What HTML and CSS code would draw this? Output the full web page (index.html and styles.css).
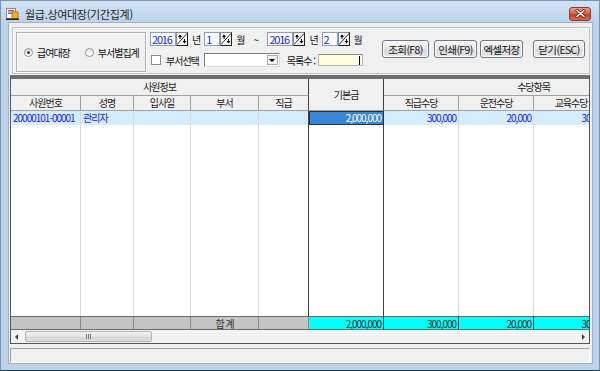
FILE: index.html
```html
<!DOCTYPE html>
<html lang="ko">
<head>
  <meta charset="UTF-8">
  <title>월급.상여대장(기간집계)</title>
  <link rel="stylesheet" href="styles.css">
</head>
<body>

  <div class="window">

    <!-- Title bar -->
    <div class="titlebar">
      <svg class="app-icon" width="13" height="13" viewBox="0 0 13 13">
        <rect x="0.5" y="1.5" width="9" height="10" fill="#fff" stroke="#8c8c8c"/>
        <rect x="2" y="3" width="6" height="1.5" fill="#e0383c"/>
        <rect x="2" y="5.5" width="4" height="1.5" fill="#3a6fd8"/>
        <rect x="6" y="5" width="6" height="6.5" fill="#f4b21c" stroke="#b07a10"/>
        <rect x="0" y="11.5" width="13" height="1.5" fill="#222"/>
      </svg>
      <span class="title">월급.상여대장(기간집계)</span>
      <div class="close-btn">
        <svg width="11" height="9" viewBox="0 0 11 9">
          <path d="M2 1.5 L9 7.5 M9 1.5 L2 7.5" stroke="#6b1f16" stroke-width="3" stroke-linecap="round"/>
          <path d="M2 1.5 L9 7.5 M9 1.5 L2 7.5" stroke="#fff" stroke-width="1.6" stroke-linecap="round"/>
        </svg>
      </div>
    </div>

    <div class="client">

      <!-- Search panel -->
      <div class="toolbar">
        <div class="radio-box">
          <label class="radio"><span class="dot checked"></span>급여대장</label>
          <label class="radio second"><span class="dot"></span>부서별집계</label>
        </div>

        <div class="filters">
          <div class="frow">
            <div class="spin wide"><span class="spin-val">2016</span><span class="spin-btn"></span></div>
            <span class="lbl">년</span>
            <div class="spin"><span class="spin-val">1</span><span class="spin-btn"></span></div>
            <span class="lbl">월</span>
            <span class="tilde">~</span>
            <div class="spin wide"><span class="spin-val">2016</span><span class="spin-btn"></span></div>
            <span class="lbl">년</span>
            <div class="spin"><span class="spin-val">2</span><span class="spin-btn"></span></div>
            <span class="lbl">월</span>
          </div>
          <div class="frow">
            <span class="check"></span>
            <span class="lbl">부서선택</span>
            <div class="combo"><span class="combo-arrow"></span></div>
            <span class="lbl count">목록수 :</span>
            <div class="count-box"><span class="caret"></span></div>
          </div>
        </div>

        <div class="buttons">
          <button class="btn b-search">조회(F8)</button>
          <button class="btn b-print">인쇄(F9)</button>
          <button class="btn b-excel">엑셀저장</button>
          <button class="btn b-close">닫기(ESC)</button>
        </div>
      </div>

      <!-- Grid -->
      <div class="grid">
        <div class="grid-view">
          <table class="sheet">
            <colgroup>
              <col class="w-no"><col class="w-name"><col class="w-date"><col class="w-dept"><col class="w-rank">
              <col class="w-money"><col class="w-money"><col class="w-money"><col class="w-money"><col class="w-money">
            </colgroup>
            <thead>
              <tr class="hr1">
                <th colspan="5" class="dk-r">사원정보</th>
                <th rowspan="2" class="dk-r">기본금</th>
                <th colspan="4">수당항목</th>
              </tr>
              <tr class="hr2">
                <th>사원번호</th>
                <th>성명</th>
                <th>입사일</th>
                <th>부서</th>
                <th class="dk-r">직급</th>
                <th>직급수당</th>
                <th>운전수당</th>
                <th>교육수당</th>
                <th></th>
              </tr>
            </thead>
            <tbody>
              <tr class="row sel">
                <td>20000101-00001</td>
                <td>관리자</td>
                <td></td>
                <td></td>
                <td class="dk-r"></td>
                <td class="num cur">2,000,000</td>
                <td class="num">300,000</td>
                <td class="num">20,000</td>
                <td class="num">30,000</td>
                <td></td>
              </tr>
              <tr class="filler">
                <td></td><td></td><td></td><td></td><td class="dk-r"></td>
                <td class="dk-r"></td><td></td><td></td><td></td><td></td>
              </tr>
              <tr class="total">
                <td class="g"></td>
                <td class="g"></td>
                <td class="g"></td>
                <td class="g sum-lbl">합 계</td>
                <td class="g"></td>
                <td class="c num">2,000,000</td>
                <td class="c num">300,000</td>
                <td class="c num">20,000</td>
                <td class="c num">30,000</td>
                <td class="c"></td>
              </tr>
            </tbody>
          </table>
        </div>

        <div class="hscroll">
          <span class="arrow-l"></span>
          <div class="thumb"><span class="grip"></span></div>
          <span class="arrow-r"></span>
        </div>
      </div>

      <div class="status"></div>
    </div>
  </div>

</body>
</html>
```

FILE: styles.css
```css
* {
  box-sizing: border-box;
}

body {
  margin: 0;
  font-family: "Noto Sans CJK KR", "DejaVu Sans", sans-serif;
  font-size: 10px;
  letter-spacing: -1px;
  color: #111;
}

/* window frame */
.window {
  width: 600px;
  height: 371px;
  display: flex;
  flex-direction: column;
  background: linear-gradient(#d3e3f4, #bcd3eb 22px, #bcd3eb);
  border: 1px solid #7a92ae;
  border-bottom-color: #1d3848;
  padding: 0 6px 6px 7px;
}

.titlebar {
  flex-shrink: 0;
  height: 21px;
  display: flex;
  align-items: center;
}

.app-icon {
  margin: 4px 0 0 -2px;
}

.title {
  margin: 4px 0 0 6px;
  font-size: 11px;
  letter-spacing: -0.3px;
  color: #1c1c1c;
}

.close-btn {
  margin: 4px 2px 0 auto;
  width: 22px;
  height: 14px;
  border: 1px solid #8a3a30;
  border-radius: 3px;
  background: linear-gradient(#e8a08e, #d0604a 50%, #c0402c 55%, #d86a50);
  display: flex;
  align-items: center;
  justify-content: center;
}

.client {
  flex: 1;
  display: flex;
  flex-direction: column;
  background: #f0f0f0;
  border: 1px solid #9eb0c6;
  min-height: 0;
}

/* search panel */
.toolbar {
  flex-shrink: 0;
  margin: 4px 2px 0 3px;
  height: 47px;
  display: flex;
  align-items: flex-start;
  padding: 4px 4px 0 3px;
  border: 1px solid #c4c4c4;
  box-shadow: inset 1px 1px 0 #fff;
}

.radio-box {
  flex-shrink: 0;
  width: 130px;
  height: 40px;
  border: 1px solid #b0b0b0;
  box-shadow: inset 1px 1px 0 #fff, 1px 1px 0 #fff;
  display: flex;
  align-items: center;
  padding-left: 7px;
}

.radio {
  display: flex;
  align-items: center;
}

.radio.second {
  margin-left: 15px;
}

.dot {
  width: 9px;
  height: 9px;
  border: 1px solid #8e8e8e;
  border-radius: 50%;
  background: linear-gradient(#e6e6e6, #fff);
  margin-right: 4px;
  display: flex;
  align-items: center;
  justify-content: center;
}

.dot.checked::after {
  content: "";
  width: 3px;
  height: 3px;
  border-radius: 50%;
  background: #333;
}

.filters {
  flex-shrink: 0;
  margin-left: 4px;
  display: flex;
  flex-direction: column;
  gap: 7px;
}

.frow {
  height: 14px;
  display: flex;
  align-items: center;
}

.frow > * {
  flex-shrink: 0;
}

.lbl {
  margin-left: 4px;
}

.tilde {
  margin: 0 0 0 9px;
  width: 10px;
}

.spin {
  display: flex;
  height: 14px;
}

.lbl + .spin,
.tilde + .spin {
  margin-left: 4px;
}

.spin-val {
  width: 16px;
  height: 14px;
  background: #fff;
  border: 1px solid #8aa0b8;
  color: #2020f0;
  font-size: 11px;
  letter-spacing: -1.2px;
  line-height: 12px;
  padding-left: 1px;
}

.spin.wide .spin-val {
  width: 26px;
}

.spin-btn {
  width: 12px;
  height: 14px;
  border: 1px solid #8a8a8a;
  border-right-color: #222;
  border-bottom-color: #222;
  background:
    url("data:image/svg+xml,%3Csvg xmlns='http://www.w3.org/2000/svg' width='10' height='12'%3E%3Cpath d='M0 11.5 L10 0.5' stroke='%23333' stroke-width='1'/%3E%3Cpath d='M3 6V2' stroke='%23000'/%3E%3Cpath d='M1 4 L3 1.5 L5 4Z' fill='%23000'/%3E%3Cpath d='M7.5 6V10' stroke='%23000'/%3E%3Cpath d='M5.5 8 L7.5 10.5 L9.5 8Z' fill='%23000'/%3E%3C/svg%3E") no-repeat center / 10px 12px,
    #f4f4f4;
}

.check {
  margin-left: 1px;
  width: 10px;
  height: 10px;
  border: 1px solid #8e8e8e;
  background: #fff;
}

.check + .lbl {
  margin-left: 5px;
}

.combo {
  margin-left: 5px;
  width: 76px;
  height: 14px;
  background: #fff;
  border: 1px solid #7a7a7a;
  border-right-color: #dcdcdc;
  border-bottom-color: #dcdcdc;
  display: flex;
  justify-content: flex-end;
  padding: 1px;
}

.combo-arrow {
  width: 11px;
  background: #f0f0f0;
  border: 1px solid #aaa;
  display: flex;
  align-items: center;
  justify-content: center;
}

.combo-arrow::after {
  content: "";
  border-left: 3px solid transparent;
  border-right: 3px solid transparent;
  border-top: 3px solid #000;
}

.lbl.count {
  margin-left: 7px;
}

.count-box {
  margin-left: 3px;
  width: 45px;
  height: 12px;
  background: #fffde0;
  border: 1px solid #b8b8b8;
  border-top-color: #8a8a8a;
  display: flex;
  justify-content: flex-end;
  padding-right: 2px;
}

.caret {
  width: 1px;
  height: 9px;
  margin-top: 1px;
  background: #000;
}

.buttons {
  margin: 8px 0 0 auto;
  display: flex;
}

.btn {
  flex-shrink: 0;
  height: 18px;
  padding: 0;
  font-family: inherit;
  font-size: 10.5px;
  letter-spacing: -0.6px;
  color: #111;
  border: 1px solid #6c7888;
  border-radius: 3px;
  background: linear-gradient(#f8f8f8, #e8e8e8 50%, #dadada 52%, #e6e6e6);
  box-shadow: inset 0 0 0 1px #fbfbfb;
}

.b-search { width: 47px; }
.b-print { width: 43px; margin-left: 5px; }
.b-excel { width: 43px; margin-left: 3px; }
.b-close { width: 52px; margin-left: 10px; }

/* grid */
.grid {
  flex: 1;
  margin: 1px 2px 0 1px;
  display: flex;
  flex-direction: column;
  border: 1px solid #555;
  border-top: 4px solid #6e6e6e;
  background: #fff;
  min-height: 0;
}

.grid-view {
  flex: 1;
  overflow: hidden;
  min-height: 0;
}

.sheet {
  table-layout: fixed;
  width: 673px;
  border-collapse: separate;
  border-spacing: 0;
}

.w-no { width: 70px; }
.w-name { width: 53px; }
.w-date { width: 57px; }
.w-dept { width: 68px; }
.w-rank { width: 50px; }
.w-money { width: 75px; }

.sheet th {
  background: #f0f0f0;
  font-weight: normal;
  color: #222;
  padding: 0;
  line-height: 12px;
  border-right: 1px solid #a0a0a0;
  border-bottom: 1px solid #a0a0a0;
  white-space: nowrap;
  overflow: hidden;
}

.hr1 { height: 17px; }
.hr2 { height: 15px; }

.sheet td {
  padding: 0 2px;
  line-height: 12px;
  border-right: 1px solid #dadada;
  white-space: nowrap;
  overflow: hidden;
}

.sheet .dk-r {
  border-right-color: #404040;
}

.row {
  height: 13px;
}

.row.sel td {
  background: #d4ecfb;
  color: #1a1af0;
}

.row.sel td.cur {
  background: #3a86d6;
  color: #fff;
  border: 1px solid #303030;
}

.num {
  text-align: right;
}

.filler {
  height: 191px;
}

.total {
  height: 14px;
}

.total td {
  border-top: 1px solid #6a6a6a;
  border-right: 1px solid #6a6a6a;
}

.total td.g {
  background: #c4c4c4;
  border-right-color: #8a8a8a;
}

.total td.c {
  background: #00ffff;
  color: #1a2a2a;
  border-right-color: #303030;
}

.sum-lbl {
  text-align: center;
  color: #333;
}

.hscroll {
  flex-shrink: 0;
  height: 14px;
  background: #f3f3f3;
  border-top: 1px solid #6a6a6a;
  display: flex;
  align-items: center;
}

.arrow-l {
  margin-left: 4px;
  border-top: 3px solid transparent;
  border-bottom: 3px solid transparent;
  border-right: 3px solid #444;
}

.thumb {
  margin-left: 7px;
  width: 127px;
  height: 11px;
  border: 1px solid #b2b2b2;
  border-radius: 2px;
  background: linear-gradient(#f4f4f4, #e2e2e2 50%, #d4d4d4 51%, #dedede);
  display: flex;
  align-items: center;
  justify-content: center;
}

.grip {
  width: 5px;
  height: 5px;
  border-left: 1px solid #777;
  border-right: 1px solid #777;
  background: linear-gradient(90deg, transparent 1px, #777 1px, #777 2px, transparent 2px);
}

.arrow-r {
  margin: 0 4px 0 auto;
  border-top: 3px solid transparent;
  border-bottom: 3px solid transparent;
  border-left: 3px solid #444;
}

.status {
  flex-shrink: 0;
  margin: 4px 2px 0 1px;
  height: 15px;
  border: 1px solid #a0a0a0;
  border-right-color: #fff;
  border-bottom-color: #fff;
}
```
